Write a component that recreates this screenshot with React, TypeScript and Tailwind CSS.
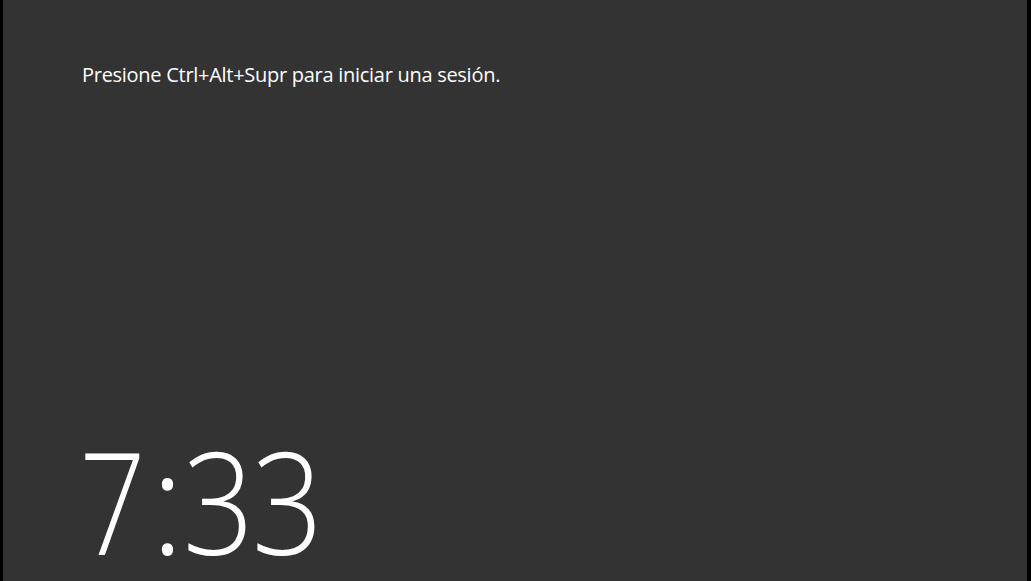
const clock = [
  { ch: "7", w: "w-[76px]", s: "scale-x-[0.82]" },
  { ch: ":", w: "w-[33px]", s: "scale-x-100" },
  { ch: "3", w: "w-[70px]", s: "scale-x-[0.88]" },
  { ch: "3", w: "w-[68px]", s: "scale-x-[0.88]" },
];

export default function App() {
  return (
    <div className="flex h-[581px] w-[1031px] overflow-hidden bg-black">
      <div className="ml-[3px] mr-[4px] flex flex-1 flex-col justify-between bg-[#333333] pl-[79px] pb-[10px] pt-[62px] text-white">
        <p className="font-['Open_Sans',sans-serif] text-[20px] leading-[26px] tracking-[-0.28px]">
          Presione Ctrl+Alt+Supr para iniciar una sesión.
        </p>
        <div className="-ml-[7px] flex font-['Open_Sans',sans-serif] text-[142px] font-light leading-[142px]">
          {clock.map((c, i) => (
            <span key={i} className={`flex justify-center ${c.w}`}>
              <span className={c.s}>{c.ch}</span>
            </span>
          ))}
        </div>
      </div>
    </div>
  );
}
